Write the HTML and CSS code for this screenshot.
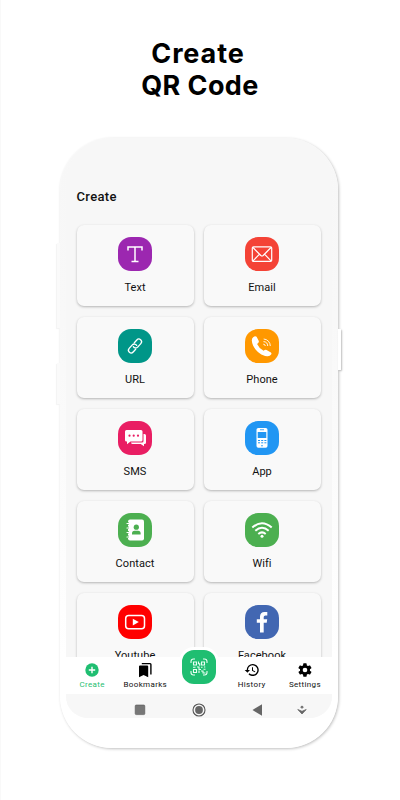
FILE: index.html
```html
<!DOCTYPE html>
<html lang="en">
<head>
    <meta charset="UTF-8">
    <title>Create QR Code</title>
    <link rel="stylesheet" href="styles.css">
</head>
<body>
    <h1 class="title"><span class="title-top">Create</span><span class="title-bottom">QR Code</span></h1>

    <div class="phone">
        <span class="side volume"></span>
        <span class="side lock"></span>
        <span class="side power"></span>

        <div class="screen">
            <div class="content">
                <h2 class="heading">Create</h2>
                <div class="cards">
                    <div class="card">
                        <div class="icon text">
                            <svg viewBox="0 0 34 34" fill="none" stroke="#fff" stroke-width="1.5"><path d="M10 13.5V10h14v3.5M17 10v14.5M13.500 24.5h7"/></svg>
                        </div>
                        <span>Text</span>
                    </div>
                    <div class="card">
                        <div class="icon email">
                            <svg viewBox="0 0 34 34" fill="none" stroke="#fff" stroke-width="1.2"><rect x="7.3" y="9.8" width="19.4" height="14.6" rx="1.2"/><path d="M8 10.5l7.8 8q1.200 1 2.400 0l7.800-8M8 23.800l6.500-6.600M26 23.800l-6.500-6.600"/></svg>
                        </div>
                        <span>Email</span>
                    </div>
                    <div class="card">
                        <div class="icon url">
                            <svg viewBox="0 0 34 34" fill="none" stroke="#fff" stroke-width="1.3" stroke-linecap="round"><g transform="rotate(-48 17 17)"><path d="M15 19.700h-3.700a2.700 2.700 0 0 1 0-5.400h4.700a2.700 2.700 0 0 1 2.600 3.500"/><path d="M19 14.300h3.700a2.700 2.700 0 0 1 0 5.400H18a2.700 2.700 0 0 1-2.600-3.500"/></g></svg>
                        </div>
                        <span>URL</span>
                    </div>
                    <div class="card">
                        <div class="icon call">
                            <svg viewBox="0 0 34 34" fill="#fff"><path d="M8.200 8.300q1.800-1.800 3.400-.6l2.200 4.200q.5 1.600-1.700 3 1.800 4.200 6.500 6.800 1.600-1.600 3-.8l4.300 2.500q1 .8.200 2.200-1.300 2-4 1.700C14.500 26.500 7.300 19 6.800 11.500q0-2.200 1.400-3.200z"/><g fill="none" stroke="#fff" stroke-width=".9"><path d="M18.300 15.200a2 2 0 0 1 2 1.800M18.500 12.600a4.500 4.500 0 0 1 4.200 4.400M18.700 10a7 7 0 0 1 6.600 7"/></g></svg>
                        </div>
                        <span>Phone</span>
                    </div>
                    <div class="card">
                        <div class="icon sms">
                            <svg viewBox="0 0 34 34"><path fill="#fff" d="M25.500 13h1q1.500 0 1.500 1.500v7q0 1.500-1.500 1.500H26v2.300L22.700 23H14.500q-1.200 0-1.500-1.500h11q1.500 0 1.500-1.500z"/><path fill="#fff" d="M8.500 9h14.500q1.500 0 1.500 1.500V19q0 1.500-1.500 1.500H12.500L9 23.300v-2.800h-.5Q7 20.500 7 19v-8.500Q7 9 8.500 9z"/><g fill="#e91e63"><circle cx="11.500" cy="14.700" r="1.100"/><circle cx="15.700" cy="14.700" r="1.100"/><circle cx="20" cy="14.700" r="1.100"/></g></svg>
                        </div>
                        <span>SMS</span>
                    </div>
                    <div class="card">
                        <div class="icon app">
                            <svg viewBox="0 0 34 34"><rect x="11.500" y="7" width="11" height="19.700" rx="1.800" fill="#fff"/><g fill="#2196f3"><rect x="12.700" y="11" width="8.600" height="6"/><rect x="15" y="8.400" width="4" height=".8"/><circle cx="17" cy="24.800" r=".8"/></g><path d="M13 19.500h8.500M13 21.800h8.500" stroke="#2196f3" stroke-width="1" stroke-dasharray="2 1.200"/></svg>
                        </div>
                        <span>App</span>
                    </div>
                    <div class="card">
                        <div class="icon contact">
                            <svg viewBox="0 0 34 34"><rect x="10" y="6.500" width="16" height="21" rx="2" fill="#fff"/><g fill="#4caf50"><circle cx="18.300" cy="14.200" r="2.600"/><path d="M14 21.500v-1.300q0-2.500 2.500-2.500h3.600q2.500 0 2.500 2.500v1.300z"/></g><path d="M10 9.200v16" stroke="#4caf50" stroke-width="1.600"  stroke-dasharray="2.500 1.900"/><path d="M9 10.500h3.500M9 15h3.500M9 19.500h3.500M9 24h3.500" stroke="#fff" stroke-width="1.200" stroke-linecap="round"/></svg>
                        </div>
                        <span>Contact</span>
                    </div>
                    <div class="card">
                        <div class="icon wifi">
                            <svg viewBox="0 0 34 34" fill="none" stroke="#fff" stroke-width="2"><path d="M7.300 14.600q9.700-8.600 19.400 0M10.300 17.800q6.700-6 13.400 0M13.300 21q3.700-3.200 7.400 0"/><circle cx="17" cy="23.300" r="1.500" fill="#fff" stroke="none"/></svg>
                        </div>
                        <span>Wifi</span>
                    </div>
                    <div class="card">
                        <div class="icon youtube">
                            <svg viewBox="0 0 34 34"><rect x="7.700" y="10.500" width="18.800" height="13.300" rx="3" fill="none" stroke="#fff" stroke-width="1.500"/><path d="M14.800 13.800v6.600l6-3.300z" fill="#fff"/></svg>
                        </div>
                        <span>Youtube</span>
                    </div>
                    <div class="card">
                        <div class="icon facebook">
                            <svg viewBox="0 0 34 34"><path fill="#fff" d="M15 27.500V17.800h-3.200v-3.500H15v-2.600q0-4.700 4.600-4.700h2.700v3.400h-1.900q-1.700 0-1.700 1.700v2.200h3.500l-.5 3.500h-3v9.700z"/></svg>
                        </div>
                        <span>Facebook</span>
                    </div>
                </div>
            </div>

            <div class="nav">
                <div class="nav-item active">
                    <svg viewBox="0 0 16 16"><circle cx="8" cy="8" r="6.700" fill="#1fbe71"/><path d="M8 4.800v6.400M4.800 8h6.400" stroke="#fff" stroke-width="1.400"/></svg>
                    <span>Create</span>
                </div>
                <div class="nav-item">
                    <svg viewBox="0 0 16 16"><path d="M2 4.500Q2 3.500 3 3.500h7.200q1 0 1 1v10.700L6.600 13 2 15.200z"/><path d="M4.800 1.600h8.300q.8 0 .8.800v10" fill="none" stroke="#000" stroke-width="1.400"/></svg>
                    <span>Bookmarks</span>
                </div>
                <div class="nav-item">
                    <div class="scan">
                        <svg viewBox="0 0 34 34" fill="none" stroke="#e9fff3" stroke-width="1.100"><path d="M9 13v-1.500Q9 9 11.500 9H13M21 9h1.500Q25 9 25 11.500V13M25 21v1.500q0 2.500-2.500 2.500H21M13 25h-1.500Q9 25 9 22.500V21"/><path d="M11.500 12h3v3h-3zM19.500 12h3v3h-3zM11.500 19.500h3v3h-3zM16.500 11.500v2.200h1.200v2M11 17.300h2.500M15 17h2v2.500h2M19 17.300h1.500M22 17h1.300M17 20.500v2.500M19 21h2v2h2.500M21.500 19.200h2"/></svg>
                    </div>
                </div>
                <div class="nav-item">
                    <svg viewBox="0 0 24 24"><path d="M13 3a9 9 0 0 0-9 9H1l3.900 3.900.1.100L9 12H6a7 7 0 1 1 2.100 4.900l-1.400 1.400A9 9 0 1 0 13 3zm-1 5v5l4.300 2.500.7-1.200-3.500-2.100V8z"/></svg>
                    <span>History</span>
                </div>
                <div class="nav-item">
                    <svg viewBox="0 0 24 24"><path fill-rule="evenodd" d="M19.400 13a7 7 0 0 0 0-2l2.100-1.600a.5.5 0 0 0 .1-.7l-2-3.400a.5.5 0 0 0-.6-.2l-2.500 1a7 7 0 0 0-1.700-1l-.4-2.600a.5.5 0 0 0-.5-.5h-4a.5.5 0 0 0-.5.500L9 5.100a7 7 0 0 0-1.700 1l-2.500-1a.5.5 0 0 0-.6.200l-2 3.400a.5.5 0 0 0 .1.700L4.600 11a7 7 0 0 0 0 2l-2.200 1.600a.5.5 0 0 0-.1.700l2 3.400c.1.200.4.300.6.200l2.500-1a7 7 0 0 0 1.600 1l.4 2.600c0 .3.200.5.500.5h4c.3 0 .5-.2.500-.5l.4-2.600a7 7 0 0 0 1.700-1l2.500 1c.2.100.5 0 .6-.2l2-3.400a.5.5 0 0 0-.1-.7zM12 15.500a3.500 3.500 0 1 1 0-7 3.500 3.500 0 0 1 0 7z"/></svg>
                    <span>Settings</span>
                </div>
            </div>

            <div class="system-bar">
                <svg viewBox="0 0 16 16"><rect x="3.200" y="3" width="9.600" height="9.600" rx="1" fill="#777" stroke="#555" stroke-width=".6"/></svg>
                <svg viewBox="0 0 16 16"><circle cx="8" cy="8" r="6" fill="none" stroke="#555" stroke-width="1.100"/><circle cx="8" cy="8" r="3.900" fill="#666"/></svg>
                <svg viewBox="0 0 16 16"><path d="M2.500 8l9.500-5.800v11.600z" fill="#666"/></svg>
                <svg viewBox="0 0 16 16"><circle cx="8" cy="5.200" r="1.400" fill="#777"/><path d="M3.800 7.500L8 12l4.200-4.500L8 9.300z" fill="#666" stroke="#666" stroke-width=".8"/></svg>
            </div>
        </div>
    </div>
</body>
</html>
```

FILE: styles.css
```css
* {
    box-sizing: border-box;
}

body {
    margin: 0;
    height: 800px;
    background: #fff;
    box-shadow: inset 1px 0 #f9f9f9;
    font-family: Roboto, sans-serif;
    color: #111;
    overflow: hidden;
}

.title {
    display: flex;
    flex-direction: column;
    align-items: center;
    height: 138px;
    margin: 0;
    padding-top: 38px;
    font-family: Inter, sans-serif;
    font-size: 27px;
    font-weight: 700;
    line-height: 32px;
    color: #000;
}

.title-top {
    padding-right: 4px;
    letter-spacing: 0.9px;
}

.title-bottom {
    letter-spacing: 0.4px;
}

.phone {
    position: relative;
    width: 278px;
    height: 610px;
    margin-left: 59.5px;
    padding: 0 6px;
    border-radius: 52px;
    background: linear-gradient(#f7f7f7 0%, #f8f8f8 30%, #fff 85%);
    box-shadow: 1px 1px 3px rgba(0, 0, 0, 0.25);
}

.side {
    position: absolute;
    left: -3px;
    width: 3px;
    background: #fafafa;
    box-shadow: -1px 1px 1px rgba(0, 0, 0, 0.05);
}

.volume {
    top: 105px;
    height: 85px;
}

.lock {
    top: 225px;
    height: 41px;
}

.power {
    top: 191px;
    left: 278px;
    height: 41px;
    background: #fff;
    box-shadow: 1px 1px 2px rgba(0, 0, 0, 0.25);
}

.screen {
    display: flex;
    flex-direction: column;
    height: 580px;
    border-radius: 46px 46px 22px 22px;
    overflow: hidden;
    background: #f7f7f7;
}

.content {
    height: 519px;
    padding: 49px 11px 0;
    overflow: hidden;
}

.heading {
    height: 38px;
    margin: 0;
    font-size: 13px;
    font-weight: 500;
    line-height: 19px;
    letter-spacing: 0.35px;
}

.cards {
    display: grid;
    grid-template-columns: 117px 117px;
    grid-auto-rows: 81px;
    gap: 11px 10px;
}

.card {
    display: flex;
    flex-direction: column;
    align-items: center;
    padding-top: 12px;
    border-radius: 7px;
    background: #f9f9f9;
    box-shadow: 0 1px 2.5px rgba(0, 0, 0, 0.27);
    font-size: 11px;
    line-height: 14px;
    letter-spacing: 0.05px;
}

.card span {
    margin-top: 10px;
}

.icon {
    width: 34px;
    height: 34px;
    border-radius: 13px;
}

.icon svg,
.scan svg {
    display: block;
    width: 34px;
    height: 34px;
}

.text { background: #9c27b0; }
.email { background: #f44336; }
.url { background: #009688; }
.call { background: #ff9800; }
.sms { background: #e91e63; }
.app { background: #2196f3; }
.contact { background: #4caf50; }
.wifi { background: #4caf50; }
.youtube { background: #ff0000; }
.facebook { background: #4267b2; }

.nav {
    display: flex;
    position: relative;
    height: 37px;
    background: #fff;
}

.nav-item {
    display: flex;
    flex: 1;
    flex-direction: column;
    align-items: center;
    padding-top: 5px;
    font-size: 8px;
    line-height: 10px;
    letter-spacing: 0.35px;
}

.nav-item > svg {
    width: 16px;
    height: 16px;
}

.nav-item span {
    margin-top: 2px;
}

.active {
    color: #1fbe71;
}

/* scan button sticks out above the nav */
.scan {
    flex-shrink: 0;
    width: 40px;
    height: 40px;
    margin-top: -15px;
    border: 3px solid #fff;
    border-radius: 15px;
    background: #1fbe71;
}

.system-bar {
    display: grid;
    grid-template-columns: 59px 59px 44px 16px;
    height: 24px;
    padding: 8px 0 0 66px;
    background: #f7f7f7;
}

.system-bar svg {
    width: 16px;
    height: 16px;
}
```
